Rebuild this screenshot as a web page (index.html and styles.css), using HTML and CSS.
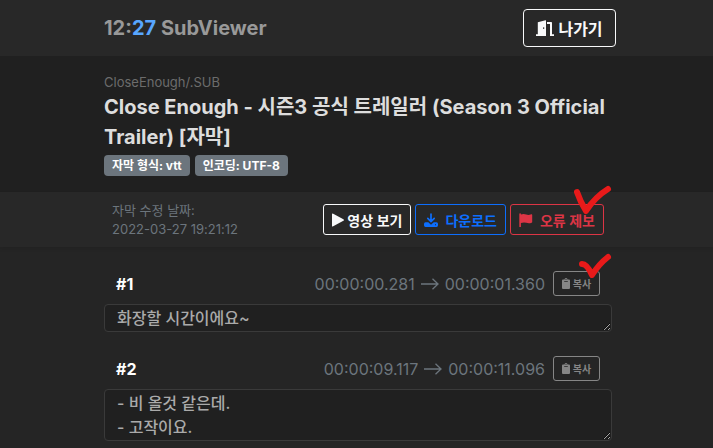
FILE: index.html
```html
<!DOCTYPE html>
<html lang="ko">
<head>
  <meta charset="UTF-8" />
  <meta name="viewport" content="width=device-width, initial-scale=1" />
  <title>12:27 SubViewer</title>
  <link rel="stylesheet" href="styles.css">
</head>
<body>
  <header class="topbar">
    <div class="container topbar-inner">
      <a class="brand" href="#">12:<span>27</span> SubViewer</a>
      <button type="button" class="btn btn-exit">
        <svg class="icon-door" viewBox="0 0 18 16" fill="currentColor" aria-hidden="true">
          <path fill-rule="evenodd" d="M0 14.200h1.800V2.200L9.500.2q.5-.1.5.4V16H0zM7.200 7.300v1.700h1v-1.700z" />
          <path d="M11 2h4.200q.8 0 .8.8v11.400h2V16h-4V4h-3z" />
        </svg>
        나가기
      </button>
    </div>
  </header>

  <section class="intro">
    <div class="container">
      <p class="path">CloseEnough/.SUB</p>
      <h1>Close Enough - 시즌3 공식 트레일러 (Season 3 Official Trailer) [자막]</h1>
      <div class="badges">
        <span class="badge">자막 형식: vtt</span>
        <span class="badge">인코딩: UTF-8</span>
      </div>
    </div>
  </section>

  <section class="toolbar">
    <div class="container toolbar-inner">
      <p class="date">자막 수정 날짜:<br />2022-03-27 19:21:12</p>
      <div class="actions">
        <button type="button" class="btn btn-play">
          <svg class="icon-play" viewBox="0 0 12 14" fill="currentColor" aria-hidden="true">
            <path d="M0 1.3Q0 0 1.2.7l10.2 5.5q1.2.8 0 1.6L1.2 13.3Q0 14 0 12.7z" />
          </svg>
          영상 보기
        </button>
        <button type="button" class="btn btn-download">
          <svg class="icon" viewBox="0 0 14 14" aria-hidden="true">
            <path d="M7 1v7M3.8 5.4 7 8.6l3.2-3.2" fill="none" stroke="currentColor" stroke-width="1.7" stroke-linecap="round" stroke-linejoin="round" />
            <path fill="currentColor" fill-rule="evenodd" d="M1.5 9.3h2.8L7 11.7l2.7-2.4h2.8Q14 9.3 14 11v1.3q0 1.7-1.5 1.7h-11Q0 14 0 12.3V11q0-1.7 1.5-1.7zM11 11.2v1h1v-1z" />
          </svg>
          다운로드
        </button>
        <button type="button" class="btn btn-report">
          <svg class="icon" viewBox="0 0 14 14" fill="currentColor" aria-hidden="true">
            <path d="M.3 1Q.3.2 1.1.2t.8.8v.5q2.700-1 5.200 0t5.100-.2q1-.4 1 .6v7q0 .6-.6.8-2.600 1-5.200.1t-5.500.2V14H.3z" />
          </svg>
          오류 제보
          <svg class="mark" viewBox="0 0 38 30" aria-hidden="true">
            <path d="M2 7Q5 16 11 26 20 12 33 4" />
          </svg>
        </button>
      </div>
    </div>
  </section>

  <main class="container cues">
    <article class="cue">
      <div class="cue-head">
        <label class="cue-no" for="cue1">#1</label>
        <span class="cue-time">00:00:00.281
          <svg class="arrow" viewBox="0 0 18 12" aria-hidden="true"><path d="M0 6h17M11.500.8 17 6l-5.500 5.200" /></svg>
          00:00:01.360</span>
        <button type="button" class="btn btn-copy">
          <svg class="icon-clip" viewBox="0 0 8 11" fill="currentColor" aria-hidden="true">
            <path fill-rule="evenodd" d="M1 1.5h1.5a1.5 1.5 0 0 1 3 0H7q1 0 1 1V10q0 1-1 1H1q-1 0-1-1V2.5q0-1 1-1zM2.2 3v.8h3.6V3zM3.6 1v.9h.8V1z" />
          </svg>
          복사
          <svg class="mark" viewBox="0 0 38 30" aria-hidden="true">
            <path d="M11 12Q16 12 21 23 28 12 37 5" />
          </svg>
        </button>
      </div>
      <textarea id="cue1" rows="1" readonly>화장할 시간이에요~</textarea>
    </article>

    <article class="cue">
      <div class="cue-head">
        <label class="cue-no" for="cue2">#2</label>
        <span class="cue-time">00:00:09.117
          <svg class="arrow" viewBox="0 0 18 12" aria-hidden="true"><path d="M0 6h17M11.500.8 17 6l-5.500 5.200" /></svg>
          00:00:11.096</span>
        <button type="button" class="btn btn-copy">
          <svg class="icon-clip" viewBox="0 0 8 11" fill="currentColor" aria-hidden="true">
            <path fill-rule="evenodd" d="M1 1.5h1.5a1.5 1.5 0 0 1 3 0H7q1 0 1 1V10q0 1-1 1H1q-1 0-1-1V2.5q0-1 1-1zM2.2 3v.8h3.6V3zM3.6 1v.9h.8V1z" />
          </svg>
          복사
        </button>
      </div>
      <textarea id="cue2" rows="2" readonly>- 비 올것 같은데.
- 고작이요.</textarea>
    </article>
  </main>
</body>
</html>
```

FILE: styles.css
```css
:root {
  --bg: #252525;
  --bar-bg: #282828;
  --dark-bg: #202020;
  --muted: #6c757d;
  --blue: #0d6efd;
  --red: #dc3545;
}
* {
  margin: 0;
  padding: 0;
  box-sizing: border-box;
}
body {
  font-family: Inter, 'Noto Sans CJK KR', sans-serif;
  font-size: 16px;
  line-height: 24px;
  background-color: var(--bg);
  color: #ddd;
  word-break: keep-all;
}
.container {
  max-width: 720px;
  margin: 0 auto;
  padding: 0 101px 0 104px;
}
.btn {
  position: relative;
  display: flex;
  align-items: center;
  justify-content: center;
  border: 1px solid currentColor;
  border-radius: 3px;
  background: transparent;
  font-family: inherit;
  font-weight: 600;
  white-space: nowrap;
  cursor: pointer;
}
.topbar {
  background-color: var(--bar-bg);
}
.topbar-inner {
  display: flex;
  align-items: center;
  justify-content: space-between;
  height: 56px;
  padding-right: 97px;
}
.brand {
  color: #999;
  font-size: 20px;
  font-weight: 700;
  text-decoration: none;
}
.brand span {
  color: #58a6ff;
}
.btn-exit {
  gap: 4px;
  width: 93px;
  height: 38px;
  border-radius: 4px;
  color: #f8f9fa;
  font-size: 16px;
}
.icon-door {
  width: 18px;
  height: 16px;
}
.intro {
  padding: 16px 0;
  background-color: var(--dark-bg);
}
.path {
  color: #6c6c6c;
  font-size: 13px;
  line-height: 20px;
}
h1 {
  font-size: 20px;
  font-weight: 700;
  line-height: 30px;
}
.badges {
  display: flex;
  gap: 5px;
  margin-top: 3px;
}
.badge {
  padding: 0 8px;
  border-radius: 4px;
  background-color: var(--muted);
  color: #fff;
  font-size: 12px;
  font-weight: 700;
  line-height: 21px;
}
.toolbar {
  background-color: var(--bar-bg);
  box-shadow: 0 2px 4px rgba(0, 0, 0, 0.08);
}
.toolbar-inner {
  display: flex;
  align-items: center;
  justify-content: space-between;
  height: 55px;
  padding-right: 109px;
}
.date {
  padding-left: 8px;
  color: var(--muted);
  font-size: 13px;
  line-height: 19px;
}
.actions {
  display: flex;
  gap: 4px;
}
.actions .btn {
  height: 31px;
  padding: 0 8px;
  font-size: 14px;
}
.actions .btn-play {
  gap: 3px;
  color: #f8f9fa;
}
.btn-download,
.btn-report {
  gap: 7px;
}
.btn-download {
  color: var(--blue);
}
.btn-report {
  color: var(--red);
}
.icon {
  width: 14px;
  height: 14px;
}
.icon-play {
  width: 12px;
  height: 14px;
}
.cues {
  padding-top: 22px;
}
.cue {
  margin-bottom: 22px;
}
.cue-head {
  display: flex;
  align-items: center;
  height: 29px;
  padding: 0 12px;
  margin-bottom: 6px;
}
.cue-no {
  flex: 1;
  color: #fff;
  font-weight: 700;
}
.cue-time {
  display: flex;
  align-items: center;
  gap: 6px;
  margin-right: 8px;
  color: var(--muted);
}
.arrow {
  width: 18px;
  height: 12px;
  fill: none;
  stroke: currentColor;
  stroke-width: 1.3;
}
.btn-copy {
  gap: 3px;
  width: 47px;
  height: 25px;
  color: #868686;
  font-size: 10px;
}
.icon-clip {
  width: 8px;
  height: 11px;
}
.mark {
  position: absolute;
  right: -10px;
  top: -20px;
  width: 38px;
  height: 30px;
  fill: none;
  stroke: #e81a1a;
  stroke-width: 6;
  stroke-linecap: round;
  stroke-linejoin: round;
  overflow: visible;
  pointer-events: none;
}
textarea {
  display: block;
  width: 100%;
  padding: 1px 12px;
  border: 1px solid #3a3a3a;
  border-radius: 4px;
  background-color: var(--dark-bg);
  color: #aaa;
  font-family: inherit;
  font-size: 16px;
  font-weight: 500;
  line-height: 24px;
  outline: none;
  overflow: hidden;
  resize: vertical;
}
```
